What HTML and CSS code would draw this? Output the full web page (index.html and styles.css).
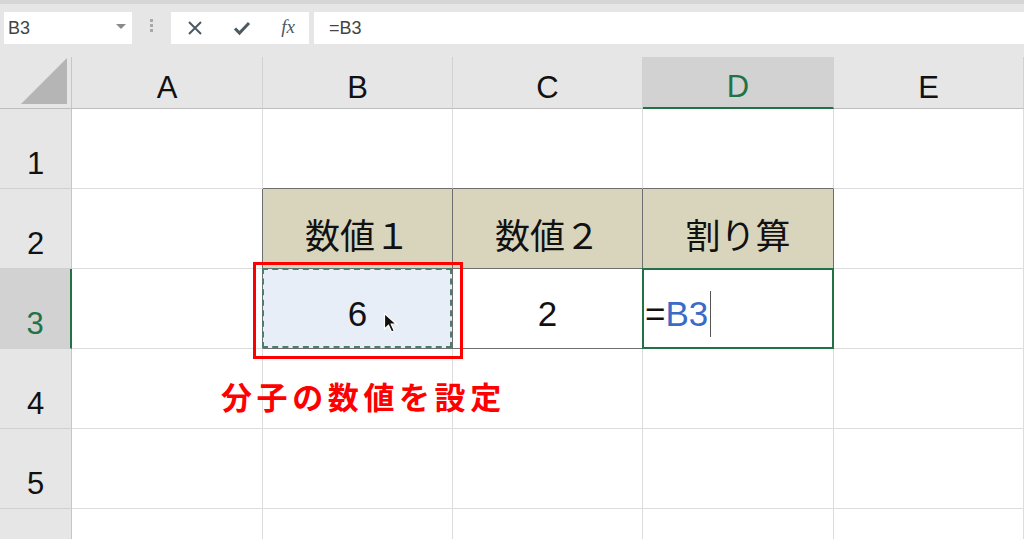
FILE: index.html
```html
<!DOCTYPE html>
<html lang="ja">
<head>
    <meta charset="UTF-8">
    <title>割り算</title>
    <link rel="stylesheet" href="styles.css">
</head>
<body>
<div id="toolbar">
    <div class="name-box">
        <span>B3</span>
        <span class="drop"></span>
    </div>
    <div class="grip"><i></i><i></i><i></i></div>
    <div class="buttons">
        <svg width="16" height="16" viewBox="0 0 16 16"><path d="M2 2L14 14M14 2L2 14" stroke="#4b5a63" stroke-width="2" fill="none"/></svg>
        <svg width="18" height="16" viewBox="0 0 18 16"><path d="M2 8.5L6.5 13L16 3" stroke="#4b5a63" stroke-width="3" fill="none"/></svg>
        <span class="fx">fx</span>
    </div>
    <div class="formula">=B3</div>
</div>

<div id="sheet">
    <div class="corner"><svg width="50" height="50" viewBox="0 0 50 50"><path d="M48 2V48H2Z" fill="#b5b5b5"/></svg></div>
    <div class="col-head">A</div>
    <div class="col-head">B</div>
    <div class="col-head">C</div>
    <div class="col-head on">D</div>
    <div class="col-head">E</div>

    <div class="row-head">1</div>
    <div class="cell"></div>
    <div class="cell edge-b"></div>
    <div class="cell edge-b"></div>
    <div class="cell edge-b"></div>
    <div class="cell"></div>

    <div class="row-head">2</div>
    <div class="cell edge-r"></div>
    <div class="cell th">数値１</div>
    <div class="cell th">数値２</div>
    <div class="cell th">割り算</div>
    <div class="cell"></div>

    <div class="row-head on">3</div>
    <div class="cell edge-r"></div>
    <div class="cell td copy">6
        <svg class="pointer" width="16" height="22" viewBox="0 0 16 22"><path d="M1.5 1.5V17L5.5 13.2L8.6 20L11.2 18.8L8.2 12.2H13.5Z" fill="#111" stroke="#fff" stroke-width="1.2"/></svg>
    </div>
    <div class="cell td">2</div>
    <div class="cell td active"><span>=</span><span class="ref">B3</span><span class="caret"></span></div>
    <div class="cell"></div>

    <div class="row-head">4</div>
    <div class="cell"></div>
    <div class="cell"></div>
    <div class="cell"></div>
    <div class="cell"></div>
    <div class="cell"></div>

    <div class="row-head">5</div>
    <div class="cell"></div>
    <div class="cell"></div>
    <div class="cell"></div>
    <div class="cell"></div>
    <div class="cell"></div>

    <div class="row-head"></div>
    <div class="cell"></div>
    <div class="cell"></div>
    <div class="cell"></div>
    <div class="cell"></div>
    <div class="cell"></div>

    <div class="red-box"></div>
    <div class="note">分子の数値を設定</div>
</div>
</body>
</html>
```

FILE: styles.css
```css
* {
    margin: 0;
    padding: 0;
    box-sizing: border-box;
}

body {
    width: 1024px;
    height: 539px;
    overflow: hidden;
    background: #fff;
    font-family: "Liberation Sans", "Noto Sans CJK JP", sans-serif;
}

#toolbar {
    display: flex;
    align-items: flex-start;
    height: 57px;
    padding: 8px 0 0 4px;
    border-top: 4px solid #d6d6d6;
    background: #e6e6e6;
}

.name-box {
    display: flex;
    align-items: center;
    justify-content: space-between;
    width: 128px;
    height: 32px;
    padding: 0 6px 0 4px;
    background: #fff;
    font-size: 18px;
    color: #444;
}

.drop {
    width: 0;
    height: 0;
    border-left: 5px solid transparent;
    border-right: 5px solid transparent;
    border-top: 5px solid #8a8a8a;
    margin-top: -4px;
}

.grip {
    display: flex;
    flex-direction: column;
    align-items: center;
    gap: 2px;
    width: 39px;
    padding-top: 7px;
}

.grip i {
    display: block;
    width: 3px;
    height: 3px;
    background: #a8a8a8;
}

.buttons {
    display: flex;
    align-items: center;
    justify-content: space-between;
    width: 138px;
    height: 32px;
    padding: 0 14px 0 16px;
    background: #fff;
}

.fx {
    font-family: "Liberation Serif", serif;
    font-style: italic;
    font-size: 19px;
    color: #4b5a63;
    margin-top: -3px;
}

.formula {
    flex: 1;
    height: 32px;
    margin-left: 5px;
    padding-left: 15px;
    line-height: 32px;
    background: #fff;
    font-size: 18px;
    color: #444;
}

#sheet {
    position: relative;
    display: grid;
    grid-template-columns: 72px 191px 190px 190px 191px 190px;
    grid-template-rows: 52px repeat(5, 80px) 32px;
}

.corner {
    display: flex;
    align-items: flex-end;
    justify-content: flex-end;
    padding: 0 2px 2px 0;
    background: #e6e6e6;
    border-right: 1px solid #c6c6c6;
    border-bottom: 1px solid #bdbdbd;
}

.col-head {
    display: flex;
    align-items: center;
    justify-content: center;
    padding-top: 10px;
    background: #e6e6e6;
    border-right: 1px solid #d2d2d2;
    border-bottom: 1px solid #bdbdbd;
    font-size: 31px;
    color: #111;
}

.col-head.on {
    background: #d2d2d2;
    color: #217346;
    border-bottom: 2px solid #217346;
}

.row-head {
    display: flex;
    align-items: center;
    justify-content: center;
    padding-top: 30px;
    background: #e6e6e6;
    border-right: 1px solid #c6c6c6;
    border-bottom: 1px solid #d0d0d0;
    font-size: 31px;
    color: #111;
}

.row-head.on {
    background: #d2d2d2;
    color: #217346;
    border-right: 2px solid #217346;
}

.cell {
    position: relative;
    border-right: 1px solid #dcdcdc;
    border-bottom: 1px solid #dcdcdc;
}

.edge-b {
    border-bottom-color: #6e6e6e;
}

.edge-r {
    border-right-color: #6e6e6e;
}

.th, .td {
    display: flex;
    align-items: center;
    justify-content: center;
    padding-top: 10px;
    border-right-color: #6e6e6e;
    border-bottom-color: #6e6e6e;
    font-family: "Noto Sans CJK JP", sans-serif;
    font-size: 35px;
    color: #111;
}

.th {
    background: #d9d5bd;
}

.td {
    font-family: "Liberation Sans", "Noto Sans CJK JP", sans-serif;
    font-size: 35px;
}

.copy {
    background: #e8eef8;
}

.copy::after {
    content: "";
    position: absolute;
    top: -1px;
    left: -1px;
    right: 0;
    bottom: 0;
    border: 2px dashed #4c7f69;
}

.pointer {
    position: absolute;
    left: 120px;
    top: 43px;
}

.active {
    justify-content: flex-start;
    padding-left: 2px;
}

.active::after {
    content: "";
    position: absolute;
    top: -1px;
    left: -1px;
    right: -1px;
    bottom: -1px;
    border: 2px solid #217346;
}

.ref {
    color: #3b6bc8;
}

.caret {
    width: 1px;
    height: 46px;
    margin-left: 2px;
    background: #555;
}

.red-box {
    position: absolute;
    left: 253px;
    top: 205px;
    width: 210px;
    height: 97px;
    border: 3px solid #ff0000;
}

.note {
    position: absolute;
    left: 221px;
    top: 316px;
    font-family: "Noto Sans CJK JP", sans-serif;
    font-weight: bold;
    font-size: 31px;
    letter-spacing: 4.6px;
    color: #ff0000;
}
```
